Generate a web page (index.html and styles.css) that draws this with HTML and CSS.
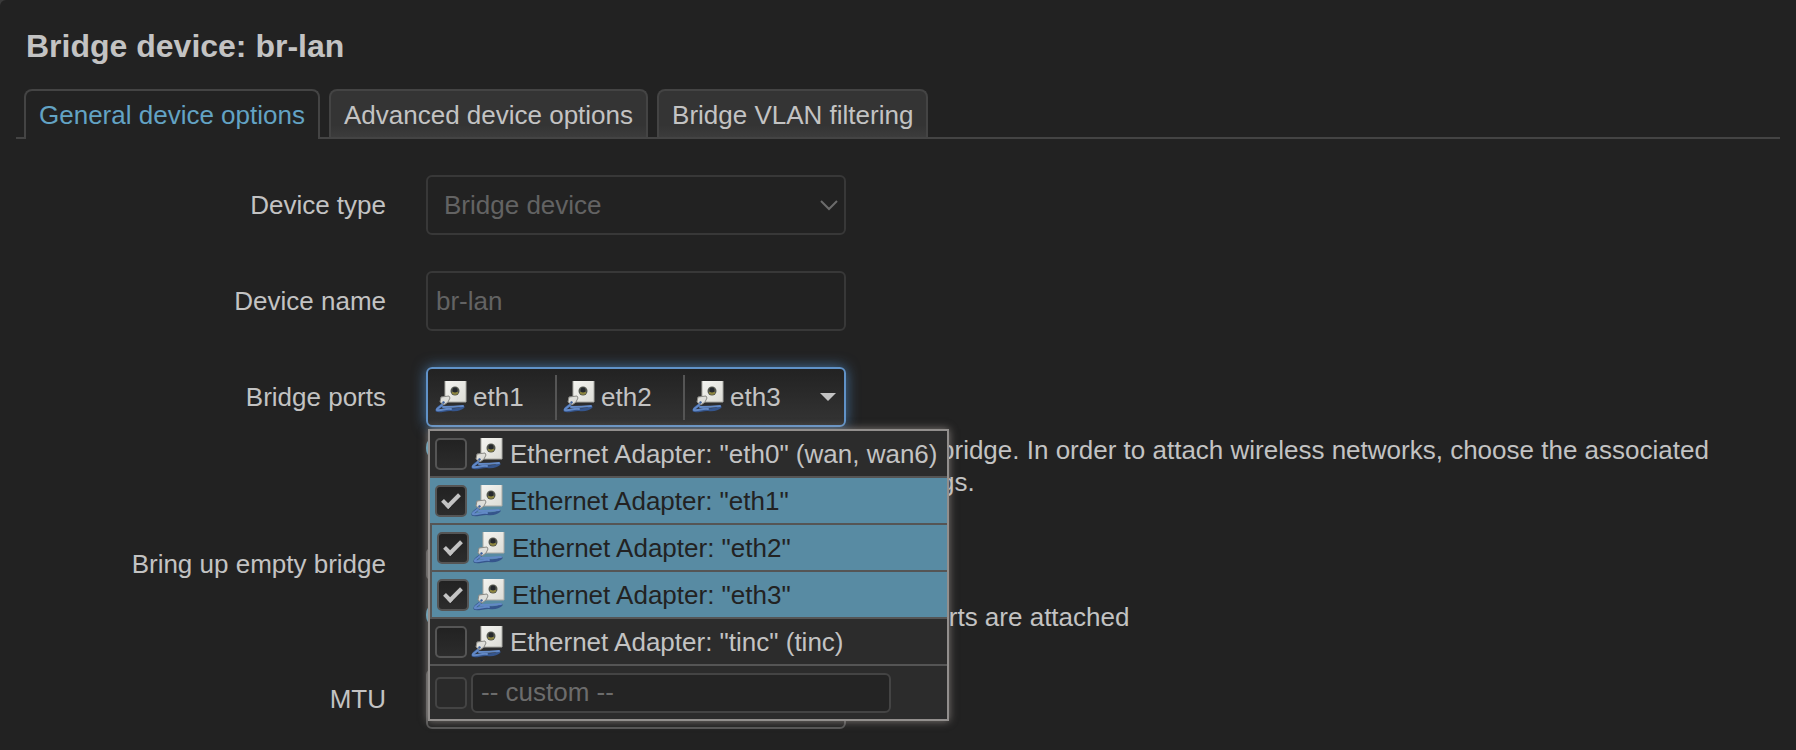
FILE: index.html
```html
<!DOCTYPE html>
<html lang="en">
<head>
<meta charset="utf-8">
<title>Bridge device: br-lan</title>
<link rel="stylesheet" href="styles.css">
</head>
<body>
<svg class="defs" aria-hidden="true">
  <defs>
    <linearGradient id="plate" x1="0" y1="0" x2="1" y2="1">
      <stop offset="0" stop-color="#f4f4f0"/>
      <stop offset="1" stop-color="#dcdcd6"/>
    </linearGradient>
    <symbol id="port" viewBox="0 0 32 32">
      <path d="M8 23C5 26 1 28 2 29.500C5 31 11 28 16 28.500S25 29 28 26" fill="none" stroke="#35558c" stroke-width="3" stroke-linecap="round"/>
      <path d="M8 26C13 26 19 26 28 25M7 24C4 27 1 28 2 29C6 30 11 27 16 28" fill="none" stroke="#6289c6" stroke-width="2" stroke-linecap="round"/>
      <rect x="10" y="0" width="21" height="21" fill="url(#plate)"/>
      <path d="M10 0V20M31 0V21M10 21H31" stroke="#aaaaa4" stroke-width="1"/>
      <circle cx="20" cy="10" r="4.500" fill="#55584f"/>
      <path d="M17 11H23V12.500Q20 15 17 12.500Z" fill="#8f8740"/>
      <circle cx="20" cy="9" r="2.500" fill="#25282c"/>
      <path d="M6 16L14 15L15 17L13 21L9 24L5 21Z" fill="#deded9" stroke="#8a8a86" stroke-width="1"/>
      <path d="M8 20L10 21L9 23L7 22Z" fill="#3d5f9c"/>
    </symbol>
    <symbol id="help" viewBox="0 0 32 32">
      <circle cx="16" cy="16" r="16" fill="#5a9cb8"/>
      <path d="M11 12a5 5 0 1 1 7 5q-2 1-2 4M16 24v3" fill="none" stroke="#222" stroke-width="3"/>
    </symbol>
  </defs>
</svg>
<main class="dialog">
  <h3 class="title">Bridge device: br-lan</h3>
  <nav class="tabs">
    <a class="tab active" href="#general">General device options</a>
    <a class="tab" href="#advanced">Advanced device options</a>
    <a class="tab" href="#vlan">Bridge VLAN filtering</a>
  </nav>
  <form class="form">
    <div class="row">
      <label class="label" for="type">Device type</label>
      <div class="field">
        <div class="select-wrap">
          <select class="control select" id="type" disabled><option>Bridge device</option></select>
          <svg class="chevron" viewBox="0 0 18 12" aria-hidden="true"><path d="M1 2L9 10L17 2"/></svg>
        </div>
      </div>
    </div>
    <div class="row">
      <label class="label" for="name">Device name</label>
      <div class="field"><input class="control" id="name" type="text" value="br-lan" disabled></div>
    </div>
    <div class="row">
      <label class="label" for="ports">Bridge ports</label>
      <div class="field">
        <div class="dropdown">
          <button class="control ports" id="ports" type="button" aria-expanded="true">
            <span class="port"><svg class="icon"><use href="#port"/></svg>eth1</span>
            <span class="port"><svg class="icon"><use href="#port"/></svg>eth2</span>
            <span class="port"><svg class="icon"><use href="#port"/></svg>eth3</span>
            <span class="caret"></span>
          </button>
          <ul class="menu">
            <li class="item"><label class="choice"><input class="check" type="checkbox"><svg class="icon"><use href="#port"/></svg><span class="text">Ethernet Adapter: "eth0" (wan, wan6)</span></label></li>
            <li class="item selected"><label class="choice"><input class="check" type="checkbox" checked><svg class="icon"><use href="#port"/></svg><span class="text">Ethernet Adapter: "eth1"</span></label></li>
            <li class="item selected follow"><label class="choice"><input class="check" type="checkbox" checked><svg class="icon"><use href="#port"/></svg><span class="text">Ethernet Adapter: "eth2"</span></label></li>
            <li class="item selected follow"><label class="choice"><input class="check" type="checkbox" checked><svg class="icon"><use href="#port"/></svg><span class="text">Ethernet Adapter: "eth3"</span></label></li>
            <li class="item"><label class="choice"><input class="check" type="checkbox"><svg class="icon"><use href="#port"/></svg><span class="text">Ethernet Adapter: "tinc" (tinc)</span></label></li>
            <li class="item custom"><input class="check dim" type="checkbox" aria-label="Use custom port"><input class="custom-input" type="text" placeholder="-- custom --" aria-label="Custom port"></li>
          </ul>
        </div>
        <p class="hint"><svg class="help"><use href="#help"/></svg><span>Specifies the wired ports to attach to this bridge. In order to attach wireless networks, choose the associated interface as network in the wireless settings.</span></p>
      </div>
    </div>
    <div class="row">
      <label class="label" for="empty">Bring up empty bridge</label>
      <div class="field">
        <div class="check-line"><input class="check" id="empty" type="checkbox"></div>
        <p class="hint"><svg class="help"><use href="#help"/></svg><span>Bring up the bridge interface even if no ports are attached</span></p>
      </div>
    </div>
    <div class="row">
      <label class="label" for="mtu">MTU</label>
      <div class="field"><input class="control" id="mtu" type="text"></div>
    </div>
  </form>
</main>
</body>
</html>
```
FILE: styles.css
```css
* { box-sizing: border-box; }
body {
  margin: 0;
  background: #3a3a3a;
  color: #c3c3c3;
  font: 26px/32px "Liberation Sans", Arial, sans-serif;
}
.defs { position: absolute; width: 0; height: 0; }
.dialog { min-height: 100vh; padding: 26px 16px 16px; border-top-left-radius: 6px; background: #222; }
.title { margin: 0 0 23px; padding: 0 10px; font-size: 32px; line-height: 40px; font-weight: bold; }
.tabs { display: flex; gap: 9px; padding: 0 8px; border-bottom: 2px solid #444; }
.tab {
  height: 48px;
  padding: 8px 13px 0;
  border: 2px solid #444;
  border-bottom: 0;
  border-radius: 8px 8px 0 0;
  background: linear-gradient(#343434, #343434 75%, #3c3c3c);
  color: #c3c3c3;
  text-decoration: none;
}
.tab.active { height: 50px; margin-bottom: -2px; background: #222; color: #63a3c4; }
.form { display: flex; flex-direction: column; gap: 36px; padding-top: 36px; }
.row { display: flex; gap: 40px; }
.label { width: 370px; flex: none; padding: 14px 0; text-align: right; }
.field { flex: 1; min-width: 0; }
.control {
  display: block;
  width: 420px;
  height: 60px;
  padding: 0 8px;
  border: 2px solid #555;
  border-radius: 6px;
  background: #222;
  color: #c3c3c3;
  font: inherit;
}
.control:disabled { border-color: #383838; color: #636363; opacity: 1; }
.select-wrap { display: flex; align-items: center; }
.select { appearance: none; padding: 0 16px; }
.chevron { width: 18px; height: 12px; margin-left: -26px; fill: none; stroke: #6c6c6c; stroke-width: 2; pointer-events: none; }
.dropdown { position: relative; width: 420px; }
.ports {
  display: flex;
  align-items: center;
  padding: 0 8px 0 0;
  border-color: #6092c8;
  background: linear-gradient(#222, #343434);
  box-shadow: 0 0 14px rgba(82, 145, 210, .7);
}
.port { display: flex; align-items: center; gap: 6px; width: 129px; height: 45px; padding-left: 7px; border-right: 2px solid #555; }
.port:nth-child(2) { width: 128px; padding-left: 6px; }
.port:nth-child(3) { flex: 1; border: 0; }
.icon { flex: none; width: 32px; height: 32px; }
.caret { border: 8px solid transparent; border-top-color: #c3c3c3; border-bottom: 0; }
.menu {
  position: absolute;
  z-index: 1;
  top: 62px;
  left: 2px;
  width: max-content;
  margin: 0;
  padding: 0;
  border: 2px solid #928f8d;
  background: #2c2c2c;
  box-shadow: 0 0 8px rgba(190, 180, 175, .6);
  list-style: none;
}
.item { border-bottom: 2px solid #555; }
.item:last-child { border-bottom: 0; }
.choice { display: flex; align-items: center; gap: 4px; height: 45px; padding: 0 9px 0 5px; }
.text { padding-left: 3px; }
.selected { background: #588ba3; color: #222; }
.follow { border-left: 2px solid #555; }
.check {
  flex: none;
  appearance: none;
  width: 32px;
  height: 32px;
  margin: 0;
  border: 2px solid #555;
  border-radius: 5px;
  background: linear-gradient(#222, #2c2c2c);
}
.check:checked::before {
  content: "";
  display: block;
  box-sizing: border-box;
  width: 10px;
  height: 18px;
  margin: 3px 0 0 9px;
  border: solid #c3c3c3;
  border-width: 0 4px 4px 0;
  transform: rotate(45deg);
}
.check.dim { border-color: #444; background: #2a2a2a; }
.custom { display: flex; align-items: center; gap: 4px; height: 53px; padding-left: 5px; }
.custom-input { width: 420px; height: 40px; padding: 0 8px; border: 2px solid #444; border-radius: 6px; background: #242424; color: #c3c3c3; font: inherit; }
.custom-input::placeholder { color: #6c6c6c; opacity: 1; }
.check-line { display: flex; align-items: center; height: 60px; }
.hint { display: flex; gap: 12px; margin: 7px 0 0; }
.help { flex: none; width: 28px; height: 28px; }
```
